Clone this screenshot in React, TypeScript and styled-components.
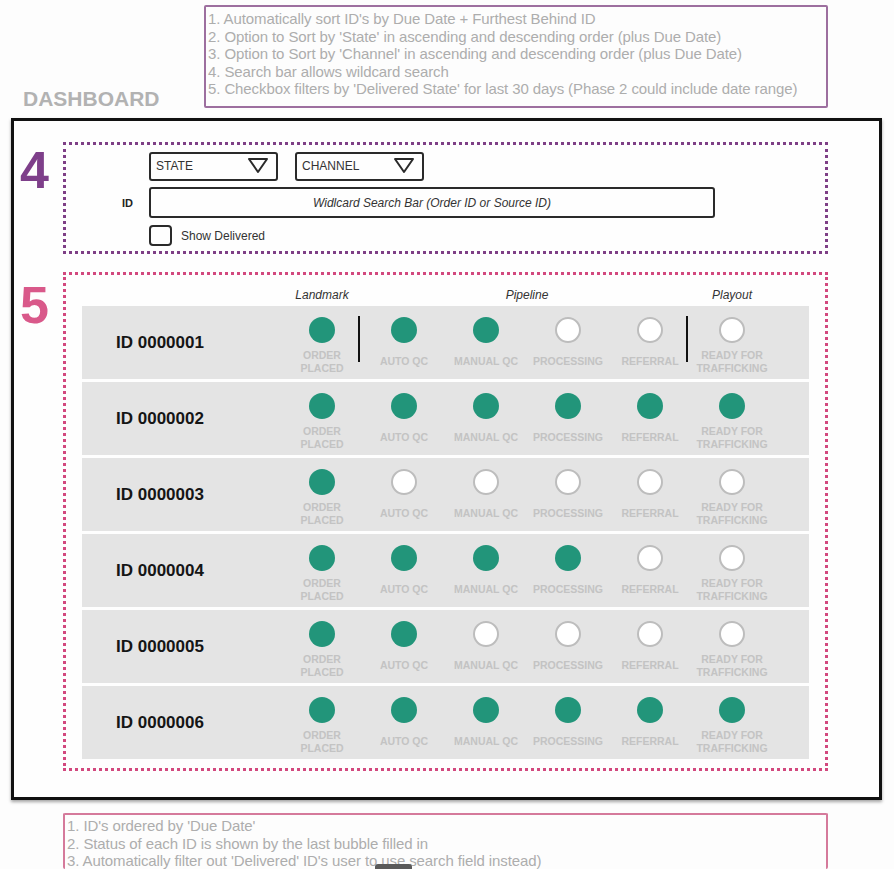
import React from "react";
import styled, { createGlobalStyle } from "styled-components";

const GlobalStyle = createGlobalStyle`
  html, body {
    margin: 0;
    padding: 0;
    background: #fdfdfd;
    overflow: hidden;
  }
  body {
    font-family: "Liberation Sans", Arial, sans-serif;
    color: #222;
  }
`;

const STAGES = [
  ["ORDER", "PLACED"],
  ["AUTO QC"],
  ["MANUAL QC"],
  ["PROCESSING"],
  ["REFERRAL"],
  ["READY FOR", "TRAFFICKING"],
];

// how many bubbles are filled in for each ID
const ORDERS = [
  { id: "ID 0000001", done: 3 },
  { id: "ID 0000002", done: 6 },
  { id: "ID 0000003", done: 1 },
  { id: "ID 0000004", done: 4 },
  { id: "ID 0000005", done: 2 },
  { id: "ID 0000006", done: 6 },
];

const Page = styled.div`
  padding-top: 5px;
  width: 894px;
`;

const Header = styled.header`
  display: flex;
  align-items: flex-end;
`;

const Title = styled.h1`
  width: 181px;
  margin: 0 0 -2px;
  padding: 0 0 0 23px;
  font-size: 21px;
  font-weight: 700;
  color: #b2b2b2;
  line-height: 22px;
`;

const Note = styled.div<{ $color: string; $open?: boolean }>`
  box-sizing: border-box;
  border: 2px solid ${(p) => p.$color};
  border-bottom: ${(p) => (p.$open ? "none" : `2px solid ${p.$color}`)};
  border-radius: 2px;
  padding: 3px 2px;
  color: #adadad;
  font-size: 15px;
  line-height: 17.5px;
  letter-spacing: -0.1px;
`;

const TopNote = styled(Note)`
  width: 624px;
  height: 103px;
`;

const BottomNote = styled(Note)`
  width: 765px;
  height: 56px;
  margin: 13px 0 0 63px;
  padding-top: 2px;
`;

const Frame = styled.main`
  box-sizing: border-box;
  width: 871px;
  height: 682px;
  margin: 10px 0 0 11px;
  border: 3px solid #111;
  box-shadow: 0 2px 3px rgba(0, 0, 0, 0.35);
  background: #fefefe;
  padding-top: 21px;
  display: flex;
  flex-direction: column;
  gap: 18px;
`;

const Section = styled.section`
  display: flex;
  align-items: flex-start;
`;

const Num = styled.div<{ $color: string; $offset: number }>`
  width: 43px;
  padding-left: 6px;
  margin-top: ${(p) => p.$offset}px;
  font-size: 52px;
  font-weight: 700;
  line-height: 1;
  color: ${(p) => p.$color};
`;

const FilterBox = styled.div`
  box-sizing: border-box;
  width: 765px;
  height: 112px;
  border: 3px dotted #7e3f86;
  padding-top: 7px;
  display: grid;
  grid-template-columns: 83px 1fr;
  grid-template-rows: 29px 31px 21px;
  row-gap: 6px;
  align-items: center;
`;

const FieldLabel = styled.div`
  text-align: right;
  padding-right: 16px;
  font-size: 11px;
  font-weight: 700;
  color: #222;
`;

const Selects = styled.div`
  display: flex;
  gap: 17px;
`;

const Select = styled.div`
  box-sizing: border-box;
  width: 129px;
  height: 29px;
  border: 2px solid #2a2a2a;
  border-radius: 3px;
  padding: 0 7px 2px 5px;
  display: flex;
  align-items: center;
  justify-content: space-between;
  font-size: 12px;
  color: #333;
`;

const Search = styled.div`
  box-sizing: border-box;
  width: 566px;
  height: 31px;
  border: 2px solid #2a2a2a;
  border-radius: 3px;
  display: flex;
  align-items: center;
  justify-content: center;
  font-size: 12px;
  font-style: italic;
  color: #333;
`;

const CheckRow = styled.label`
  display: flex;
  align-items: center;
  gap: 9px;
  font-size: 12px;
  color: #333;
  margin-top: 2px;
`;

const Check = styled.span`
  box-sizing: border-box;
  width: 23px;
  height: 21px;
  border: 2px solid #2a2a2a;
  border-radius: 4px;
`;

const ListBox = styled.div`
  box-sizing: border-box;
  width: 765px;
  height: 499px;
  border: 3px dotted #d2487e;
  padding: 0 16px;
`;

const Grid = styled.div`
  display: grid;
  grid-template-columns: 199px repeat(6, 82px);
`;

const HeadRow = styled(Grid)`
  height: 31px;
  align-items: end;
  padding-bottom: 4px;
  box-sizing: border-box;
`;

const Phase = styled.div<{ $span: number }>`
  grid-column: span ${(p) => p.$span};
  text-align: center;
  font-size: 12px;
  font-style: italic;
  color: #333;
  line-height: 14px;
`;

const Rows = styled.div`
  display: flex;
  flex-direction: column;
  gap: 3px;
`;

const Row = styled(Grid)`
  height: 73px;
  background: #e4e4e4;
`;

const OrderId = styled.div`
  align-self: center;
  padding-left: 34px;
  font-size: 17px;
  font-weight: 700;
  color: #151515;
`;

const Stage = styled.div<{ $divider?: boolean }>`
  position: relative;
  display: flex;
  flex-direction: column;
  align-items: center;
  padding-top: 11px;

  &::after {
    content: "";
    display: ${(p) => (p.$divider ? "block" : "none")};
    position: absolute;
    right: 3px;
    top: 10px;
    width: 2px;
    height: 46px;
    background: #111;
  }
`;

const Dot = styled.span<{ $filled: boolean }>`
  box-sizing: border-box;
  width: 26px;
  height: 26px;
  border-radius: 50%;
  background: ${(p) => (p.$filled ? "#22957a" : "#fff")};
  border: ${(p) => (p.$filled ? "none" : "2px solid #bdbdbd")};
`;

const StageLabel = styled.div`
  height: 27px;
  margin-top: 5px;
  display: flex;
  flex-direction: column;
  justify-content: center;
  align-items: center;
  font-size: 10.5px;
  font-weight: 700;
  line-height: 13px;
  color: #c3c3c3;
  white-space: nowrap;
`;

const Handle = styled.div`
  position: fixed;
  left: 375px;
  bottom: 0;
  width: 37px;
  height: 5px;
  border-radius: 3px 3px 0 0;
  background: #5a5a5a;
`;

const Caret = () => (
  <svg width="22" height="17" viewBox="0 0 22 17">
    <polygon points="2,2 20,2 11,15" fill="none" stroke="#2a2a2a" strokeWidth="2" strokeLinejoin="round" />
  </svg>
);

export default function App() {
  return (
    <Page>
      <GlobalStyle />
      <Header>
        <Title>DASHBOARD</Title>
        <TopNote $color="#9d6f9f">
          <div>1. Automatically sort ID's by Due Date + Furthest Behind ID</div>
          <div>2. Option to Sort by 'State' in ascending and descending order (plus Due Date)</div>
          <div>3. Option to Sort by 'Channel' in ascending and descending order (plus Due Date)</div>
          <div>4. Search bar allows wildcard search</div>
          <div>5. Checkbox filters by 'Delivered State' for last 30 days (Phase 2 could include date range)</div>
        </TopNote>
      </Header>

      <Frame>
        <Section>
          <Num $color="#7e3f8a" $offset={2}>4</Num>
          <FilterBox>
            <div />
            <Selects>
              <Select>
                STATE <Caret />
              </Select>
              <Select>
                CHANNEL <Caret />
              </Select>
            </Selects>
            <FieldLabel>ID</FieldLabel>
            <Search>Widlcard Search Bar (Order ID or Source ID)</Search>
            <div />
            <CheckRow>
              <Check />
              Show Delivered
            </CheckRow>
          </FilterBox>
        </Section>

        <Section>
          <Num $color="#d9598a" $offset={7}>5</Num>
          <ListBox>
            <HeadRow>
              <div />
              <Phase $span={1}>Landmark</Phase>
              <Phase $span={4}>Pipeline</Phase>
              <Phase $span={1}>Playout</Phase>
            </HeadRow>
            <Rows>
              {ORDERS.map((o, r) => (
                <Row key={o.id}>
                  <OrderId>{o.id}</OrderId>
                  {STAGES.map((lines, i) => (
                    <Stage key={i} $divider={r === 0 && (i === 0 || i === 4)}>
                      <Dot $filled={i < o.done} />
                      <StageLabel>
                        {lines.map((l) => (
                          <span key={l}>{l}</span>
                        ))}
                      </StageLabel>
                    </Stage>
                  ))}
                </Row>
              ))}
            </Rows>
          </ListBox>
        </Section>
      </Frame>

      <BottomNote $color="#d57a9b" $open>
        <div>1. ID's ordered by 'Due Date'</div>
        <div>2. Status of each ID is shown by the last bubble filled in</div>
        <div>3. Automatically filter out 'Delivered' ID's user to use search field instead)</div>
      </BottomNote>
      <Handle />
    </Page>
  );
}
